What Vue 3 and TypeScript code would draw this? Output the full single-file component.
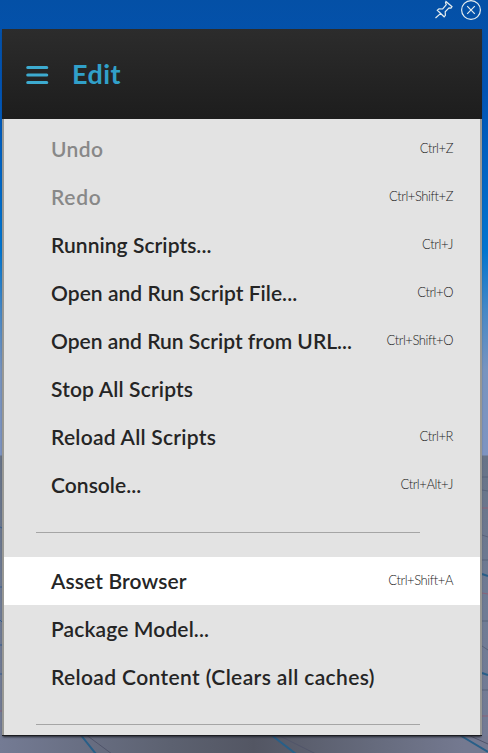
<script setup lang="ts">
interface MenuItem {
  label: string
  shortcut?: string
  disabled?: boolean
  active?: boolean
  spacing?: number
}

const groups: MenuItem[][] = [
  [
    { label: 'Undo', shortcut: 'Ctrl+Z', disabled: true, spacing: 0.4 },
    { label: 'Redo', shortcut: 'Ctrl+Shift+Z', disabled: true, spacing: 0.7 },
    { label: 'Running Scripts...', shortcut: 'Ctrl+J', spacing: 0.06 },
    { label: 'Open and Run Script File...', shortcut: 'Ctrl+O', spacing: 0.04 },
    { label: 'Open and Run Script from URL...', shortcut: 'Ctrl+Shift+O' },
    { label: 'Stop All Scripts', spacing: 0.15 },
    { label: 'Reload All Scripts', shortcut: 'Ctrl+R', spacing: 0.25 },
    { label: 'Console...', shortcut: 'Ctrl+Alt+J', spacing: 0.04 },
  ],
  [
    { label: 'Asset Browser', shortcut: 'Ctrl+Shift+A', active: true, spacing: 0.12 },
    { label: 'Package Model...', spacing: 0.12 },
    { label: 'Reload Content (Clears all caches)', spacing: 0.37 },
  ],
]
</script>

<template>
  <main class="desktop">
    <svg class="scene" viewBox="0 0 488 753" aria-hidden="true">
      <g fill="none" stroke-width="1">
        <path d="M0 527l2 1M0 587h2M0 620l3 3M0 645h2M0 674h2" stroke="#365f91" />
        <path d="M0 711h2M482 508h6M482 593l6 1M482 716h6" stroke="#8b6578" />
        <path d="M482 477h6M482 490l6 1M482 535l6 2M482 560h6M482 621h6M482 646l6 4M482 690h6" stroke="#59647b" />
        <path d="M80 734l16 20M270 734l26 20M458 734l30 18M482 574l6 2M482 673l6 2" stroke="#285f88" stroke-width="2" />
        <path d="M85 734l27 20M276 734l40 20M466 734l22 10" stroke="#50546a" />
      </g>
    </svg>
    <div class="window-tools">
      <svg width="20" height="20" viewBox="0 0 20 20" aria-label="Pin">
        <path d="M12 1.5 18 6.7l-1 1.4-2-.3-3.8 4 .2 3.5-1.3 1.5-6.8-6.5L5 8.8l3.7.2 3.6-4.3-.8-2zM6.7 13.4 1.5 18" />
      </svg>
      <svg width="22" height="20" viewBox="0 0 22 20" aria-label="Close">
        <circle cx="11" cy="10" r="9.4" />
        <path d="m7.2 6.2 7.6 7.6m0-7.6-7.6 7.6" />
      </svg>
    </div>
    <section class="window">
      <header class="header">
        <svg class="burger" width="24" height="20" viewBox="0 0 24 20" aria-hidden="true">
          <path d="M2.8 2.5h18.9M2.8 10h18.9M2.8 17.5h18.9" />
        </svg>
        <h1>Edit</h1>
      </header>
      <nav class="menu">
        <template v-for="(group, index) in groups" :key="index">
          <div
            v-for="item in group"
            :key="item.label"
            class="item"
            :class="{ disabled: item.disabled, active: item.active }"
          >
            <span class="label" :style="{ letterSpacing: `${item.spacing ?? 0}px` }">{{ item.label }}</span>
            <span v-if="item.shortcut" class="shortcut">{{ item.shortcut }}</span>
          </div>
          <div class="separator"></div>
        </template>
      </nav>
    </section>
  </main>
</template>

<style>
body {
  overflow: hidden;
}
</style>

<style scoped>
.desktop {
  position: relative;
  width: 488px;
  height: 753px;
  overflow: hidden;
  font-family: Lato, sans-serif;
  background:
    linear-gradient(90deg, #747b94 0, #5c6170 35%, #535663 52%, #656a7c 76%, #747990 95%) 0 736px / 100% 17px no-repeat,
    linear-gradient(#0450a6 0, #0253b2 90px, #0060c0 150px, #0075cf 250px, #4688c6 310px, #7894bf 370px, #7e94c1 455px, #687488 456px, #707c95 610px, #747b94 753px);
}
.scene {
  position: absolute;
  inset: 0;
}
.window-tools {
  display: flex;
  justify-content: flex-end;
  gap: 6px;
  height: 29px;
  padding-right: 6px;
  box-sizing: border-box;
}
.window-tools svg {
  position: relative;
  fill: none;
  stroke: #e5edef;
  stroke-width: 1.2;
}
.window {
  position: relative;
  width: 480px;
  height: 707px;
  margin-left: 2px;
  box-sizing: border-box;
  border-bottom: 1px solid #1c1d22;
  box-shadow: 0 2px 2px -1px #252831;
}
.header {
  display: flex;
  align-items: center;
  gap: 23px;
  height: 90px;
  padding-left: 23px;
  box-sizing: border-box;
  background: linear-gradient(#2c2c2c, #1d1d1d);
}
.burger {
  margin-top: 2px;
  fill: none;
  stroke: #3dabd0;
  stroke-width: 3.2;
  stroke-linecap: round;
}
h1 {
  margin: 0;
  color: #31a0c9;
  font-size: 27px;
  line-height: 32px;
  letter-spacing: 0.4px;
  font-weight: 700;
}
.menu {
  height: 616px;
  overflow: hidden;
  box-sizing: border-box;
  padding-top: 6px;
  border: solid #989894;
  border-width: 0 2px;
  background: #e3e3e3;
}
.item {
  display: flex;
  justify-content: space-between;
  align-items: center;
  height: 48px;
  padding: 0 27px 2px 47px;
  box-sizing: border-box;
  color: #252525;
  white-space: nowrap;
}
.label {
  margin-top: 2px;
  font-size: 21px;
  line-height: 24px;
  font-weight: 600;
}
.shortcut {
  color: #222;
  font-size: 13px;
  line-height: 16px;
  letter-spacing: -0.43px;
  font-weight: 300;
}
.disabled .label {
  color: #888;
}
.active {
  background: #fff;
}
.separator {
  width: 384px;
  height: 1px;
  margin: 23px 0 24px 32px;
  background: #a5a5a5;
}
</style>
